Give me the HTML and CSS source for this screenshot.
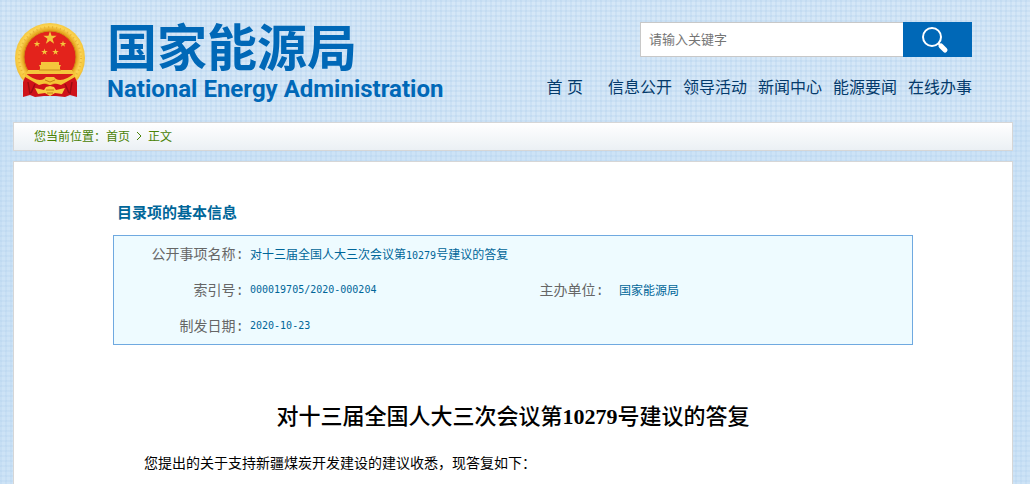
FILE: index.html
```html
<!DOCTYPE html>
<html lang="zh-CN">
<head>
<meta charset="utf-8">
<meta name="viewport" content="width=device-width, initial-scale=1">
<title>国家能源局</title>
<link rel="stylesheet" href="styles.css">
</head>
<body>
<header class="header">
  <div class="brand">
    <svg class="emblem" viewBox="0 0 70 76" aria-hidden="true">
      <defs>
        <radialGradient id="gold" cx="50%" cy="48%" r="52%">
          <stop offset="0.74" stop-color="#e8a820"/>
          <stop offset="0.84" stop-color="#fbd556"/>
          <stop offset="0.94" stop-color="#f6c73c"/>
          <stop offset="1" stop-color="#eab532"/>
        </radialGradient>
        <path id="star" d="M0-1 .225-.309H.951L.363.118.588.809 0 .382-.588.809-.363.118-.951-.309H-.225Z"/>
      </defs>
      <ellipse cx="35" cy="36" rx="35" ry="35" fill="url(#gold)"/>
      <ellipse cx="35" cy="36" rx="31" ry="31" fill="none" stroke="#d99a1c" stroke-width="2" stroke-dasharray="1 3" opacity="0.5"/>
      <ellipse cx="35" cy="35" rx="26" ry="26" fill="#e3231c" stroke="#cf8a17"/>
      <g fill="#f4c53c">
        <use href="#star" transform="translate(35 16) scale(7)"/>
        <use href="#star" transform="translate(22 22) scale(3.500)"/>
        <use href="#star" transform="translate(48 22) scale(3.500)"/>
        <use href="#star" transform="translate(29.500 30) scale(3.500)"/>
        <use href="#star" transform="translate(40.500 30) scale(3.500)"/>
        <path d="M26 40h18v3h2l-1 2v3h12l2 4H11l2-4h12v-3l-1-2h2Z"/>
      </g>
      <path d="M24 48h22" stroke="#c98a1a"/>
      <path d="M11 52h48l-6 8H17Z" fill="#d71b1a"/>
      <path d="M11 53 8 60v15l7-2 5 2 9-1h12l9 1 5-2 7 2V60l-3-7-12 7-12 3-12-3Z" fill="#cf1219"/>
      <path d="m13 60 2 12m42-12-2 12M20 62l-4 9m34-9 4 9" stroke="#9e0b12" stroke-width="1.500"/>
      <path d="M9 50q13 11 20 7l2-2h8l2 2q7 4 20-7l-1 5-14 8-7-2-4 2-4-2-7 2-14-8Z" fill="#f5c436"/>
      <path d="m20 66 9 2 2-3 4-1 4 1 2 3 9-2-3 6-7-1-5 3-5-3-7 1Z" fill="#f8cb42"/>
      <path d="m30 58 5 2 5-2m-9 10h8m-7 3h6" fill="none" stroke="#c87d14"/>
    </svg>
    <div class="brand-text">
      <div class="brand-cn">国家能源局</div>
      <div class="brand-en">National Energy Administration</div>
    </div>
  </div>
  <div class="tools">
    <form class="search" role="search">
      <input class="search-input" type="text" placeholder="请输入关键字" aria-label="请输入关键字">
      <button class="search-button" type="button" aria-label="搜索">
        <svg class="search-icon" viewBox="0 0 28 28" aria-hidden="true">
          <circle cx="11" cy="11" r="9" fill="none" stroke="#fff" stroke-width="2"/>
          <path d="m17 17 2 2" stroke="#fff" stroke-width="2"/>
          <path d="m20 20 4 4" stroke="#fff" stroke-width="5" stroke-linecap="round"/>
        </svg>
      </button>
    </form>
    <nav class="nav">
      <a class="nav-home" href="#">首 页</a>
      <a href="#">信息公开</a>
      <a href="#">领导活动</a>
      <a href="#">新闻中心</a>
      <a href="#">能源要闻</a>
      <a href="#">在线办事</a>
    </nav>
  </div>
</header>
<div class="page">
  <nav class="breadcrumb">
    <span>您当前位置：</span><a href="#">首页</a>
    <svg class="chevron" viewBox="0 0 6 10" aria-hidden="true"><path d="m1 1 4 4-4 4" fill="none" stroke="#498205"/></svg>
    <a href="#">正文</a>
  </nav>
  <main class="panel">
    <div class="content">
      <h2 class="section-title">目录项的基本信息</h2>
      <table class="info">
        <colgroup><col class="col-a"><col class="col-b"><col class="col-c"><col></colgroup>
        <tbody>
          <tr><th scope="row">公开事项名称:</th><td colspan="3">对十三届全国人大三次会议第<span class="num">10279</span>号建议的答复</td></tr>
          <tr><th scope="row">索引号:</th><td><span class="num">000019705/2020-000204</span></td><th scope="row">主办单位:</th><td class="org">国家能源局</td></tr>
          <tr><th scope="row">制发日期:</th><td colspan="3"><span class="num">2020-10-23</span></td></tr>
        </tbody>
      </table>
      <h1 class="title">对十三届全国人大三次会议第<span class="title-num">10279</span>号建议的答复</h1>
      <p class="lead">您提出的关于支持新疆煤炭开发建设的建议收悉，现答复如下：</p>
    </div>
  </main>
</div>
</body>
</html>
```
FILE: styles.css
```css
* { box-sizing: border-box; }

body {
  margin: 0;
  min-height: 100vh;
  display: flex;
  flex-direction: column;
  font-family: "Liberation Sans", "Noto Sans CJK SC", sans-serif;
  font-size: 12px;
  background-color: #d5e7f7;
  background-image:
    repeating-linear-gradient(90deg, rgba(150, 190, 228, 0.16) 0 2px, transparent 2px 5px),
    repeating-linear-gradient(rgba(150, 190, 228, 0.16) 0 2px, transparent 2px 5px);
}

a { color: inherit; text-decoration: none; }

.header {
  display: flex;
  justify-content: space-between;
  min-height: 122px;
  padding: 22px 58px 0 15px;
}

.brand { display: flex; gap: 22px; }
.emblem { width: 70px; height: 76px; }
.brand-text { color: #0068b7; font-weight: bold; white-space: nowrap; }
.brand-cn { font-size: 50px; line-height: 54px; }
.brand-en {
  font-family: Roboto, "Liberation Sans", sans-serif;
  font-size: 24px;
  line-height: 26px;
}

.tools { display: flex; flex-direction: column; align-items: flex-end; gap: 19px; }
.search { display: flex; width: 332px; height: 35px; }
.search-input {
  flex: 1;
  min-width: 0;
  padding: 0 8px;
  border: 1px solid #c8c8c8;
  border-right: 0;
  background: #fff;
  font: 13px "Liberation Sans", "Noto Sans CJK SC", sans-serif;
  color: #333;
}
.search-input::placeholder { color: #757575; }
.search-button {
  display: flex;
  align-items: center;
  justify-content: center;
  width: 69px;
  padding: 0 5px 0 0;
  border: 0;
  background: #0068b7;
}
.search-icon { width: 28px; height: 28px; }

.nav {
  display: flex;
  gap: 11px;
  font-size: 16px;
  line-height: 24px;
  color: #043a6b;
  white-space: nowrap;
}
.nav-home { margin-right: 14px; }

.page {
  flex: 1;
  display: flex;
  flex-direction: column;
  gap: 10px;
  padding: 0 17px 0 13px;
  background: rgba(184, 215, 243, 0.25);
}

.breadcrumb {
  display: flex;
  align-items: center;
  height: 29px;
  padding: 0 20px 2px;
  border: 1px solid #d6d6d6;
  background: linear-gradient(#fff, #ebf0f4);
  color: #498205;
}
.chevron { width: 6px; height: 10px; margin: 0 6px; }

.panel {
  flex: 1;
  border: 1px solid #d6d6d6;
  border-bottom: 0;
  background: #fff;
}
.content { max-width: 800px; margin: 0 auto; padding-top: 40px; }

.section-title {
  margin: 0 0 11px 4px;
  font-size: 15px;
  line-height: 22px;
  color: #006699;
}

.info {
  width: 100%;
  table-layout: fixed;
  border: 1px solid #6fa9e0;
  border-spacing: 0;
  background: #eefbff;
  color: #006699;
}
.info th, .info td { height: 36px; padding: 0 0 2px; text-align: left; }
.info th {
  padding-right: 6px;
  font-family: "Liberation Mono", "Noto Sans CJK SC", monospace;
  font-size: 14px;
  font-weight: normal;
  text-align: right;
  color: #666;
}
.col-a { width: 136px; }
.col-b { width: 226px; }
.col-c { width: 134px; }
.info .org { padding-left: 9px; }
.num { font-family: "DejaVu Sans Mono", monospace; font-size: 10px; }

.title {
  margin: 56px 0 0;
  font-family: "Liberation Serif", "Noto Sans CJK SC", serif;
  font-size: 22px;
  font-weight: 500;
  line-height: 32px;
  text-align: center;
  color: #000;
}
.title-num { font-weight: bold; }
.lead {
  margin: 18px 0 0;
  padding-left: 31px;
  font-size: 14px;
  line-height: 24px;
  color: #000;
}
```
